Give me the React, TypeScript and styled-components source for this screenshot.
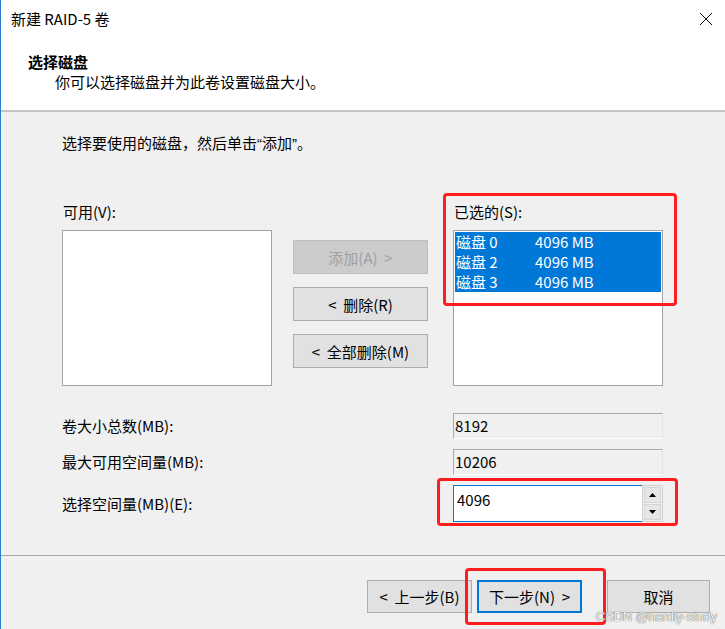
import React from "react";
import styled, { createGlobalStyle } from "styled-components";

const GlobalStyle = createGlobalStyle`
  html, body { margin: 0; padding: 0; background: #f0f0f0; }
  body {
    font-family: "Microsoft YaHei UI", "Noto Sans CJK SC", "Noto Sans", sans-serif;
    font-size: 15px;
    color: #000;
  }
  * { box-sizing: border-box; }
`;

const Window = styled.div`
  position: relative;
  width: 725px;
  height: 629px;
  display: flex;
  flex-direction: column;
  background: #f0f0f0;
  border-left: 1px solid #2b7cd3;
  overflow: hidden;
`;

const TitleBar = styled.div`
  height: 38px;
  flex: none;
  background: #fff;
  display: flex;
  align-items: center;
  justify-content: space-between;
  padding: 0 12px 0 10px;
  font-size: 15px;
  line-height: 20px;
`;

const CloseButton = styled.span`
  display: flex;
  width: 14px;
  height: 14px;
`;

const Header = styled.div`
  height: 74px;
  flex: none;
  background: #fff;
  border-bottom: 2px solid #c6c6c6;
  padding: 14px 0 0 27px;
`;

const HeaderTitle = styled.div`
  font-weight: 700;
  line-height: 20px;
`;

const HeaderSub = styled.div`
  padding-left: 27px;
  line-height: 20px;
`;

const Body = styled.div`
  flex: 1;
  padding: 21px 62px 0 61px;
`;

const Instruction = styled.div`
  height: 20px;
  line-height: 20px;
`;

const Quote = styled.span`
  font-family: "Liberation Sans", Arial, sans-serif;
  line-height: 1;
`;

const ListsGrid = styled.div`
  margin-top: 49px;
  display: grid;
  grid-template-columns: 211px 135px 1fr;
  column-gap: 20px;
  row-gap: 8px;
`;

const Label = styled.div<{ $col: number }>`
  grid-column: ${(p) => p.$col};
  grid-row: 1;
  line-height: 20px;
  justify-self: ${(p) => (p.$col === 3 ? "end" : "start")};
  width: ${(p) => (p.$col === 3 ? "210px" : "auto")};
  padding-left: 1px;
`;

const ListBox = styled.div<{ $col: number }>`
  grid-column: ${(p) => p.$col};
  grid-row: 2;
  justify-self: ${(p) => (p.$col === 3 ? "end" : "stretch")};
  width: 210px;
  height: 156px;
  background: #fff;
  border: 1px solid #a3a3a3;
  padding: 1px;
`;

const ListItem = styled.div`
  display: grid;
  grid-template-columns: 79px 1fr;
  height: 20px;
  line-height: 20px;
  background: #0078d7;
  color: #fff;
  padding-left: 1px;
  white-space: pre;
`;

const ButtonColumn = styled.div`
  grid-column: 2;
  grid-row: 2;
  padding-top: 10px;
  display: flex;
  flex-direction: column;
  gap: 13px;
`;

const Button = styled.button<{ $width?: number; $primary?: boolean }>`
  font-family: inherit;
  font-size: 15px;
  color: #000;
  height: ${(p) => (p.$width ? "33px" : "34px")};
  width: ${(p) => (p.$width ? `${p.$width}px` : "100%")};
  background: #e1e1e1;
  border: ${(p) => (p.$primary ? "2px solid #0078d7" : "1px solid #adadad")};
  padding: 0;
  margin: 0;
  display: flex;
  align-items: center;
  justify-content: center;
  white-space: pre;
  &:disabled {
    background: #cccccc;
    border-color: #bfbfbf;
    color: #a0a0a0;
  }
`;

const Fields = styled.div`
  margin-top: 27px;
  display: grid;
  grid-template-columns: 1fr 210px;
  row-gap: 10px;
  align-items: center;
`;

const FieldLabel = styled.div`
  line-height: 20px;
`;

const ReadOnlyField = styled.div`
  height: 26px;
  line-height: 24px;
  padding-left: 1px;
  background: #f0f0f0;
  border-top: 1px solid #a9a9a9;
  border-left: 1px solid #a9a9a9;
  border-right: 1px solid #e3e3e3;
  border-bottom: 1px solid #fdfdfd;
`;

const SpinBox = styled.div`
  height: 37px;
  display: flex;
`;

const SpinInput = styled.div`
  flex: 1;
  background: #fff;
  border: 1px solid #0078d7;
  border-right: none;
  padding: 4px 0 0 3px;
  line-height: 20px;
`;

const SpinButtons = styled.div`
  width: 21px;
  display: flex;
  flex-direction: column;
  background: #f0f0f0;
  border: 1px solid #cfcfcf;
  padding: 1px;
  gap: 1px;
`;

const SpinArrow = styled.div`
  flex: 1;
  background: #e6e6e6;
  border: 1px solid #d6d6d6;
  display: flex;
  align-items: center;
  justify-content: center;
`;

const Footer = styled.div`
  height: 74px;
  flex: none;
  border-top: 1px solid #a8a8a8;
  padding: 24px 15px 0 0;
  display: flex;
  justify-content: flex-end;
  align-items: flex-start;
`;

const NavGroup = styled.div`
  display: flex;
  gap: 5px;
  margin-right: 25px;
`;

const Annotation = styled.div<{ $l: number; $t: number; $w: number; $h: number }>`
  position: absolute;
  left: ${(p) => p.$l - 1}px;
  top: ${(p) => p.$t}px;
  width: ${(p) => p.$w}px;
  height: ${(p) => p.$h}px;
  border: 3px solid #ff1c1c;
  border-radius: 4px;
  pointer-events: none;
`;

const Watermark = styled.div`
  position: absolute;
  left: 595px;
  top: 608px;
  font-family: "Liberation Sans", Arial, sans-serif;
  font-size: 13px;
  line-height: 18px;
  color: #f4f4f4;
  text-shadow: 0 0 1px #6d6d6d, 0 0 1px #6d6d6d;
  letter-spacing: -0.2px;
  pointer-events: none;
`;

const Triangle = ({ up }: { up?: boolean }) => (
  <svg width="7" height="4" viewBox="0 0 7 4">
    <polygon points={up ? "0,4 7,4 3.5,0" : "0,0 7,0 3.5,4"} fill="#000" />
  </svg>
);

const disks = [
  ["磁盘 0", "4096 MB"],
  ["磁盘 2", "4096 MB"],
  ["磁盘 3", "4096 MB"],
];

export default function App() {
  return (
    <>
      <GlobalStyle />
      <Window>
        <TitleBar>
          <span>新建 RAID-5 卷</span>
          <CloseButton>
            <svg width="14" height="14" viewBox="0 0 14 14">
              <path d="M1 1 L13 13 M13 1 L1 13" stroke="#000" strokeWidth="1" fill="none" />
            </svg>
          </CloseButton>
        </TitleBar>
        <Header>
          <HeaderTitle>选择磁盘</HeaderTitle>
          <HeaderSub>你可以选择磁盘并为此卷设置磁盘大小。</HeaderSub>
        </Header>
        <Body>
          <Instruction>
            选择要使用的磁盘，然后单击<Quote>“</Quote>添加<Quote>”</Quote>。
          </Instruction>
          <ListsGrid>
            <Label $col={1}>可用(V):</Label>
            <Label $col={3}>已选的(S):</Label>
            <ListBox $col={1} />
            <ButtonColumn>
              <Button disabled>添加(A)  &gt;</Button>
              <Button>&lt;  删除(R)</Button>
              <Button>&lt;  全部删除(M)</Button>
            </ButtonColumn>
            <ListBox $col={3}>
              {disks.map(([name, size]) => (
                <ListItem key={name}>
                  <span>{name}</span>
                  <span>{size}</span>
                </ListItem>
              ))}
            </ListBox>
          </ListsGrid>
          <Fields>
            <FieldLabel>卷大小总数(MB):</FieldLabel>
            <ReadOnlyField>8192</ReadOnlyField>
            <FieldLabel>最大可用空间量(MB):</FieldLabel>
            <ReadOnlyField>10206</ReadOnlyField>
            <FieldLabel>选择空间量(MB)(E):</FieldLabel>
            <SpinBox>
              <SpinInput>4096</SpinInput>
              <SpinButtons>
                <SpinArrow>
                  <Triangle up />
                </SpinArrow>
                <SpinArrow>
                  <Triangle />
                </SpinArrow>
              </SpinButtons>
            </SpinBox>
          </Fields>
        </Body>
        <Footer>
          <NavGroup>
            <Button $width={105}>&lt;  上一步(B)</Button>
            <Button $width={105} $primary>下一步(N)  &gt;</Button>
          </NavGroup>
          <Button $width={103}>取消</Button>
        </Footer>
        <Annotation $l={443} $t={193} $w={234} $h={113} />
        <Annotation $l={437} $t={478} $w={241} $h={48} />
        <Annotation $l={465} $t={568} $w={141} $h={57} />
        <Watermark>CSDN @hardly-study</Watermark>
      </Window>
    </>
  );
}
